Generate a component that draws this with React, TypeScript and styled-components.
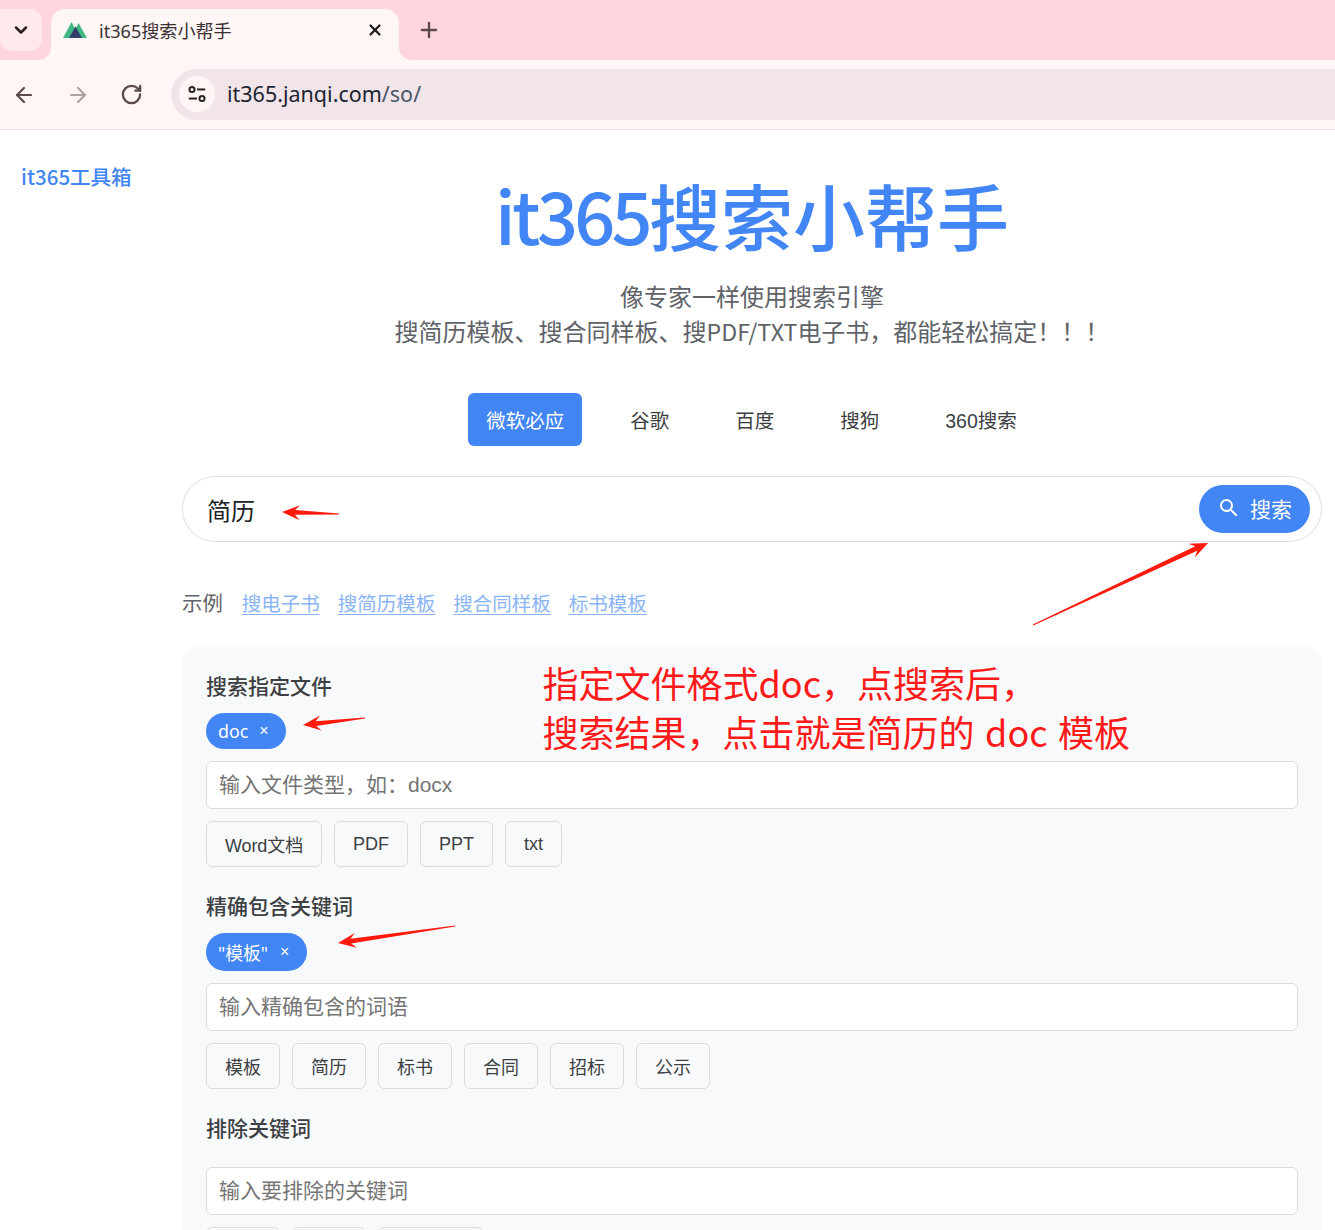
import React from 'react';
import styled, {createGlobalStyle} from 'styled-components';
import {ArrowLeft, ArrowRight, ChevronDown, Plus, RotateCw, X} from 'lucide-react';
import {MdSearch} from 'react-icons/md';

const SANS = `"Liberation Sans", "Noto Sans CJK SC", sans-serif`;
const YAHEI = `"Noto Sans", "Noto Sans CJK SC", sans-serif`;

const GlobalStyle = createGlobalStyle`
  html, body {
    margin: 0;
    padding: 0;
    background: #fff;
    overflow: hidden;
  }
  body {
    font-family: ${SANS};
  }
`;

const Shell = styled.div`
  position: relative;
  width: 1335px;
  height: 1230px;
  overflow: hidden;
`;

const TabStrip = styled.div`
  display: flex;
  align-items: flex-end;
  height: 60px;
  background: #ffd6dd;
  padding-left: 51px;
  position: relative;
`;

const TabMenu = styled.div`
  position: absolute;
  left: 0;
  top: 9px;
  width: 42px;
  height: 42px;
  border-radius: 0 12px 12px 12px;
  background: #ffe9ec;
  display: flex;
  align-items: center;
  justify-content: center;
  color: #2a1d1f;
`;

const Tab = styled.div`
  position: relative;
  width: 348px;
  height: 51px;
  box-sizing: border-box;
  background: #fff6f5;
  border-radius: 14px 14px 0 0;
  display: flex;
  align-items: center;
  padding: 0 15px 9px 12px;
  &::before,
  &::after {
    content: '';
    position: absolute;
    bottom: 0;
    width: 12px;
    height: 12px;
    background: radial-gradient(circle at var(--cx) 0, #ffd6dd 11.5px, #fff6f5 12px);
  }
  &::before {
    left: -12px;
    --cx: 0;
  }
  &::after {
    right: -12px;
    --cx: 12px;
  }
`;

const TabTitle = styled.span`
  flex: 1;
  margin-left: 12px;
  font: 18.1px ${YAHEI};
  color: #3a3032;
`;

const NewTab = styled.div`
  display: flex;
  align-items: center;
  height: 51px;
  box-sizing: border-box;
  padding: 0 0 9px 18px;
  color: #5b4a4d;
`;

const Toolbar = styled.div`
  display: flex;
  align-items: center;
  height: 70px;
  box-sizing: border-box;
  padding: 0 0 0 12px;
  background: #fff6f5;
  border-bottom: 1px solid #f3e1e0;
`;

const NavIcons = styled.div`
  display: flex;
  gap: 30px;
  margin-right: 28px;
`;

const NavIcon = styled.span<{$dim?: boolean}>`
  display: flex;
  color: ${props => (props.$dim ? '#ada3a4' : '#5d4a4c')};
`;

const Omnibox = styled.div`
  flex: 1;
  height: 51px;
  margin-bottom: 1px;
  background: #f1e5e9;
  border-radius: 26px 0 0 26px;
  display: flex;
  align-items: center;
  padding-left: 8px;
`;

const TuneButton = styled.span`
  display: flex;
  align-items: center;
  justify-content: center;
  width: 36px;
  height: 36px;
  border-radius: 50%;
  background: #fff6f5;
  margin-right: 12px;
`;

const Url = styled.span`
  padding-bottom: 2px;
  font: 21.5px ${YAHEI};
  color: #1c2430;
`;

const UrlPath = styled.span`
  color: #4a5566;
`;

const Page = styled.div`
  display: flex;
  align-items: flex-start;
`;

const Sidebar = styled.nav`
  width: 182px;
  box-sizing: border-box;
  padding: 33px 0 0 21px;
`;

const SideLink = styled.a`
  font: 500 20.5px/26px "Noto Sans CJK SC", sans-serif;
  color: #4285f4;
  text-decoration: none;
`;

const Main = styled.main`
  width: 1140px;
`;

const Hero = styled.header`
  text-align: center;
  padding-top: 36px;
`;

const Title = styled.h1`
  margin: 0;
  font: 500 72px/96px "Noto Sans CJK SC", sans-serif;
  color: #4285f4;
`;

const TitleLatin = styled.span`
  letter-spacing: -3.7px;
`;

const Subtitle = styled.p`
  margin: 16px 0 0;
  font: 24px/35px "Noto Sans CJK SC", sans-serif;
  color: #5f6368;
`;

const SubtitleLatin = styled.span`
  font-size: 23.2px;
`;

const EngineTabs = styled.div`
  display: flex;
  justify-content: center;
  gap: 30px;
  margin-top: 44px;
  padding-right: 1px;
`;

const EngineTab = styled.button<{$active?: boolean}>`
  height: 53px;
  padding: 0 18px;
  border: 0;
  border-radius: 6px;
  font: 19.5px ${SANS};
  background: ${props => (props.$active ? '#4285f4' : 'transparent')};
  color: ${props => (props.$active ? '#fff' : '#3c4043')};
`;

const SearchBox = styled.div`
  display: flex;
  align-items: center;
  justify-content: space-between;
  height: 66px;
  box-sizing: border-box;
  margin-top: 30px;
  padding: 0 11px 0 24px;
  border: 1px solid #e0e0e0;
  border-radius: 33px;
  background: #fff;
`;

const SearchText = styled.span`
  font: 24px "Noto Sans CJK SC", sans-serif;
  color: #202124;
`;

const SearchButton = styled.button`
  display: flex;
  align-items: center;
  gap: 9px;
  width: 111px;
  height: 48px;
  padding: 0 0 2px 18px;
  border: 0;
  border-radius: 24px;
  background: #4285f4;
  color: #fff;
  font: 21px "Noto Sans CJK SC", sans-serif;
`;

const Examples = styled.div`
  display: flex;
  align-items: center;
  gap: 18px;
  margin-top: 44px;
  height: 32px;
`;

const ExampleLabel = styled.span`
  margin-right: 1px;
  font: 20.4px "Noto Sans CJK SC", sans-serif;
  color: #5f6368;
`;

const ExampleLink = styled.a`
  font: 19.5px "Noto Sans CJK SC", sans-serif;
  color: #8ab4f8;
  text-decoration: underline;
  text-underline-offset: 3px;
  text-decoration-thickness: 1px;
`;

const Panel = styled.section`
  margin-top: 29px;
  padding: 24px;
  background: #f8f9fa;
  border-radius: 16px;
`;

const Field = styled.div`
  margin-bottom: 24px;
`;

const FieldLabel = styled.div`
  height: 32px;
  font: 500 21px/28px "Noto Sans CJK SC", sans-serif;
  color: #3c4043;
`;

const ChipRow = styled.div`
  display: flex;
  margin-top: 10px;
`;

const Chip = styled.span<{$height: number; $gap: number; $padRight: number}>`
  display: inline-flex;
  align-items: center;
  gap: ${props => props.$gap}px;
  height: ${props => props.$height}px;
  padding: 0 ${props => props.$padRight}px 0 12px;
  border-radius: 19px;
  background: #4285f4;
  color: #fff;
  font: 17.8px ${YAHEI};
`;

const ChipClose = styled.span`
  font: 16px ${SANS};
`;

const TextBox = styled.div`
  display: flex;
  align-items: center;
  height: 48px;
  box-sizing: border-box;
  margin-top: 12px;
  padding: 0 12px 5px;
  border: 1px solid #dadce0;
  border-radius: 6px;
  background: #fff;
  font: 21px ${SANS};
  color: #757575;
`;

const Presets = styled.div`
  display: flex;
  gap: 12px;
  margin-top: 12px;
`;

const Preset = styled.button<{$tight?: boolean; $width?: number}>`
  height: 46px;
  padding: 0 18px;
  width: ${props => (props.$width ? `${props.$width}px` : 'auto')};
  border: 1px solid #dadce0;
  border-radius: 6px;
  background: #f8f9fa;
  color: #3c4043;
  font: 18px ${SANS};
  letter-spacing: ${props => (props.$tight ? '-0.1px' : '0')};
`;

const Annotation = styled.div`
  position: absolute;
  left: 542.5px;
  top: 658px;
  font: 36px/49px "Noto Sans CJK SC", sans-serif;
  word-spacing: 2.5px;
  color: #ff1a1a;
  white-space: pre;
`;

const Arrows = styled.svg`
  position: absolute;
  left: 0;
  top: 0;
  pointer-events: none;
`;

function arrowPoints(x1: number, y1: number, x2: number, y2: number): string {
  const len = Math.hypot(x2 - x1, y2 - y1);
  const ux = (x2 - x1) / len;
  const uy = (y2 - y1) / len;
  const at = (along: number, side: number) =>
    `${x2 - ux * along - uy * side},${y2 - uy * along + ux * side}`;
  return [
    at(0, 0),
    at(18, 7.5),
    at(13, 2.4),
    at(len, 0.5),
    at(len, -0.5),
    at(13, -2.4),
    at(18, -7.5),
  ].join(' ');
}

const ARROWS: [number, number, number, number][] = [
  [339, 514, 282, 512],
  [365, 718, 303, 725],
  [455, 926, 338, 943],
  [1033, 625, 1208, 543],
];

const ENGINES = ['微软必应', '谷歌', '百度', '搜狗', '360搜索'];
const EXAMPLES = ['搜电子书', '搜简历模板', '搜合同样板', '标书模板'];

const FIELDS = [
  {
    label: '搜索指定文件',
    chip: {text: 'doc', height: 36, gap: 11, padRight: 17},
    placeholder: '输入文件类型，如：docx',
    presets: ['Word文档', 'PDF', 'PPT', 'txt'],
  },
  {
    label: '精确包含关键词',
    chip: {text: '"模板"', height: 38, gap: 12, padRight: 18},
    placeholder: '输入精确包含的词语',
    presets: ['模板', '简历', '标书', '合同', '招标', '公示'],
  },
  {
    label: '排除关键词',
    placeholder: '输入要排除的关键词',
    presets: [],
    // only the top edge of this row is in the window, its labels are not
    blankPresets: [74, 74, 105],
  },
];

function TuneIcon(): React.ReactElement {
  return (
    <svg width="20" height="20" viewBox="0 0 22 22" fill="none" stroke="#2b2224" strokeWidth="2.2">
      <circle cx="5.5" cy="6" r="2.8" />
      <path d="M11 6h9" />
      <circle cx="16.5" cy="16" r="2.8" />
      <path d="M2 16h9" />
    </svg>
  );
}

function TabLogo(): React.ReactElement {
  return (
    <svg width="24" height="16" viewBox="0 0 24 16">
      <path d="M8.5 0L17 16H0z" fill="#41b883" />
      <path d="M15.5 1L24 16H8z" fill="#41b883" />
      <path d="M12.500 4.500L19 16H6z" fill="#34406b" />
    </svg>
  );
}

export default function App(): React.ReactElement {
  return (
    <Shell>
      <GlobalStyle />
      <TabStrip>
        <TabMenu>
          <ChevronDown size={20} strokeWidth={3} />
        </TabMenu>
        <Tab>
          <TabLogo />
          <TabTitle>it365搜索小帮手</TabTitle>
          <X size={18} strokeWidth={3} color="#1f1a1b" />
        </Tab>
        <NewTab>
          <Plus size={24} strokeWidth={2.4} />
        </NewTab>
      </TabStrip>
      <Toolbar>
        <NavIcons>
          <NavIcon>
            <ArrowLeft size={24} strokeWidth={2.2} />
          </NavIcon>
          <NavIcon $dim>
            <ArrowRight size={24} strokeWidth={2.2} />
          </NavIcon>
          <NavIcon>
            <RotateCw size={23} strokeWidth={2.4} />
          </NavIcon>
        </NavIcons>
        <Omnibox>
          <TuneButton>
            <TuneIcon />
          </TuneButton>
          <Url>
            it365.janqi.com<UrlPath>/so/</UrlPath>
          </Url>
        </Omnibox>
      </Toolbar>
      <Page>
        <Sidebar>
          <SideLink href="#">it365工具箱</SideLink>
        </Sidebar>
        <Main>
          <Hero>
            <Title>
              <TitleLatin>it365</TitleLatin>搜索小帮手
            </Title>
            <Subtitle>
              像专家一样使用搜索引擎
              <br />
              搜简历模板、搜合同样板、搜<SubtitleLatin>PDF/TXT</SubtitleLatin>电子书，都能轻松搞定！！！
            </Subtitle>
          </Hero>
          <EngineTabs>
            {ENGINES.map((engine, idx) => (
              <EngineTab key={engine} $active={idx === 0}>
                {engine}
              </EngineTab>
            ))}
          </EngineTabs>
          <SearchBox>
            <SearchText>简历</SearchText>
            <SearchButton>
              <MdSearch size={24} />
              搜索
            </SearchButton>
          </SearchBox>
          <Examples>
            <ExampleLabel>示例</ExampleLabel>
            {EXAMPLES.map(example => (
              <ExampleLink key={example} href="#">
                {example}
              </ExampleLink>
            ))}
          </Examples>
          <Panel>
            {FIELDS.map(field => (
              <Field key={field.label}>
                <FieldLabel>{field.label}</FieldLabel>
                <ChipRow>
                  {field.chip ? (
                    <Chip
                      $height={field.chip.height}
                      $gap={field.chip.gap}
                      $padRight={field.chip.padRight}>
                      {field.chip.text}
                      <ChipClose>×</ChipClose>
                    </Chip>
                  ) : null}
                </ChipRow>
                <TextBox>{field.placeholder}</TextBox>
                <Presets>
                  {field.presets.map(preset => (
                    <Preset key={preset} $tight={preset.startsWith('Word')}>
                      {preset}
                    </Preset>
                  ))}
                  {field.blankPresets?.map((width, idx) => (
                    <Preset key={idx} $width={width} />
                  ))}
                </Presets>
              </Field>
            ))}
          </Panel>
        </Main>
      </Page>
      <Annotation>
        {'指定文件格式doc，点搜索后，\n搜索结果，点击就是简历的 doc 模板'}
      </Annotation>
      <Arrows width="1335" height="1230" viewBox="0 0 1335 1230">
        {ARROWS.map(([x1, y1, x2, y2]) => (
          <polygon key={x1} points={arrowPoints(x1, y1, x2, y2)} fill="#ff1a0d" />
        ))}
      </Arrows>
    </Shell>
  );
}
